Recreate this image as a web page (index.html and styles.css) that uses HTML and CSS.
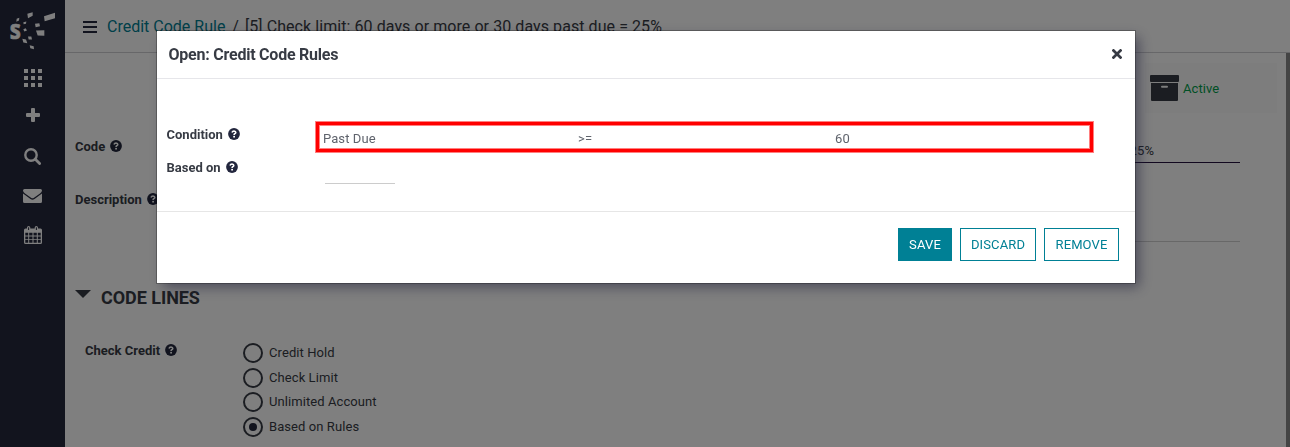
FILE: index.html
```html
<!DOCTYPE html>
<html lang="en">
<head>
<meta charset="utf-8">
<title>Credit Code Rule</title>
<link rel="stylesheet" href="styles.css">
</head>
<body>
<svg width="0" height="0" class="defs">
  <symbol id="help" viewBox="0 0 12 12">
    <circle cx="6" cy="6" r="5.9" fill="#22263d"/>
    <path d="M4 4.500Q4.500 3 6 3Q7.800 3.100 7.800 4.500Q7.700 5.400 6.700 5.800Q6.100 6.100 6.100 7" fill="none" stroke="#fff" stroke-width="1.600"/>
    <rect x="5.200" y="7.900" width="1.800" height="1.600" fill="#fff"/>
  </symbol>
</svg>
<div class="app">
  <nav class="sidebar">
    <svg class="logo" viewBox="24 30 150 125">
      <text transform="translate(29 117) scale(.86 1)" class="logo-s">s</text>
      <path d="M132 48L165 38V54L134 63ZM108 91L133 90V107L113 106ZM105 71L118 69 120 78 107 81ZM82 41L98 36V47L84 54ZM50 56L58 53 57 61 49 65ZM70 66L79 64 78 71 71 72ZM70 87L77 84 81 91 73 94ZM84 109L94 109 96 118 86 118ZM67 116L78 118 82 129 70 127ZM89 135L101 138 102 147 91 144Z" fill="#fff"/>
    </svg>
    <svg class="nav-apps" viewBox="0 0 18 18"><path d="M0 0h4v4H0zM7 0h4v4H7zM14 0h4v4h-4zM0 7h4v4H0zM7 7h4v4H7zM14 7h4v4h-4zM0 14h4v4H0zM7 14h4v4H7zM14 14h4v4h-4z" fill="#fff"/></svg>
    <svg class="nav-plus" viewBox="0 0 14 14"><path d="M5 1Q5 0 6 0h2Q9 0 9 1v4h4q1 0 1 1v2q0 1-1 1H9v4q0 1-1 1H6q-1 0-1-1V9H1Q0 9 0 8V6Q0 5 1 5h4z" fill="#fff"/></svg>
    <svg class="nav-search" viewBox="0 0 17 17"><circle cx="7" cy="7" r="5.700" fill="none" stroke="#fff" stroke-width="2.400"/><path d="M11.300 11.300L15.600 15.600" stroke="#fff" stroke-width="2.800" stroke-linecap="round"/></svg>
    <svg class="nav-mail" viewBox="0 0 19 14"><path d="M1.500 0h16Q19 0 19 1.500 19 3 17 4.500L11 8.800Q9.500 9.800 8 8.800L2 4.500Q0 3 0 1.500 0 0 1.500 0zM0 4.600L7.500 10Q9.500 11.300 11.500 10L19 4.600V12.500Q19 14 17.500 14h-16Q0 14 0 12.500z" fill="#fff"/></svg>
    <svg class="nav-cal" viewBox="0 0 18 18"><path fill-rule="evenodd" d="M1.500 2.500H3V1.500Q3 0 4.600 0T6.300 1.500v1h4.400v-1Q10.700 0 12.300 0T14 1.500v1h2.500Q18 2.500 18 4v12.500q0 1.500-1.500 1.500h-15Q0 18 0 16.500V4Q0 2.500 1.500 2.500zM1.300 6.800V9.500H4.200V6.800zM5.200 6.800V9.500H8.500V6.800zM9.500 6.800V9.500h3.300V6.800zM13.800 6.800V9.500h2.900V6.800zM1.300 10.400v2.800H4.200v-2.800zM5.200 10.400v2.800H8.500v-2.800zM9.500 10.400v2.800h3.300v-2.800zM13.800 10.400v2.800h2.900v-2.800zM1.300 14.100v2.600H4.200v-2.600zM5.200 14.100v2.600H8.500v-2.600zM9.500 14.100v2.600h3.300v-2.600zM13.800 14.100v2.600h2.900v-2.600z" fill="#fff"/><path d="M4.600 1.300V4M12.400 1.300V4" stroke="#24283d" stroke-width="1"/></svg>
  </nav>
  <main class="main">
    <header class="topbar">
      <svg class="burger" viewBox="0 0 14 12"><path d="M0 1h14M0 6h14M0 11h14" stroke="#24283f" stroke-width="2"/></svg>
      <div class="crumbs"><a>Credit Code Rule</a><span class="sep">/</span><span class="current">[5] Check limit: 60 days or more or 30 days past due = 25%</span></div>
    </header>
    <section class="sheet">
      <div class="stats"><div class="stat">
        <svg class="archive" viewBox="0 0 29 26"><path fill="#373b44" fill-rule="evenodd" d="M1 0h27q1 0 1 1v5q0 1-1 1H1Q0 7 0 6V1Q0 0 1 0zM1 8h27v17q0 1-1 1H2q-1 0-1-1zM12 10.700q-1 0-1 1t1 1h5q1 0 1-1t-1-1z"/></svg>
        <span>Active</span>
      </div></div>
      <div class="field code"><label>Code <svg class="help"><use href="#help"/></svg></label><div class="value">60 days or more or 30 days past due = 25%</div></div>
      <div class="field desc"><label>Description <svg class="help"><use href="#help"/></svg></label><div class="value"></div></div>
      <h2><i class="caret"></i><span>CODE LINES</span></h2>
      <div class="credit">
        <label>Check Credit <svg class="help"><use href="#help"/></svg></label>
        <div class="radios">
          <div class="radio"><i></i><span>Credit Hold</span></div>
          <div class="radio"><i></i><span>Check Limit</span></div>
          <div class="radio"><i></i><span>Unlimited Account</span></div>
          <div class="radio on"><i></i><span>Based on Rules</span></div>
        </div>
      </div>
    </section>
  </main>
</div>
<div class="backdrop">
  <div class="modal">
    <header class="modal-head"><h1>Open: Credit Code Rules</h1>
      <svg class="close" viewBox="0 0 10 10"><path d="M1.500 1.500L8.500 8.500M8.500 1.500L1.500 8.500" stroke="#373b44" stroke-width="2.700" stroke-linecap="square"/></svg>
    </header>
    <div class="modal-body">
      <div class="row"><label>Condition <svg class="help"><use href="#help"/></svg></label>
        <div class="condition"><span>Past Due</span><span>&gt;=</span><span>60</span></div></div>
      <div class="row based"><label>Based on <svg class="help"><use href="#help"/></svg></label><div class="blank"></div></div>
    </div>
    <footer class="modal-foot"><button class="primary">SAVE</button><button class="discard">DISCARD</button><button class="remove">REMOVE</button></footer>
  </div>
</div>
</body>
</html>
```
FILE: styles.css
```css
* { box-sizing: border-box; }
body { margin: 0; height: 447px; overflow: hidden; background: #fff; color: #373b44; font: 13px/20px Roboto, sans-serif; letter-spacing: .08px; }
svg { display: block; flex: none; }
.defs { position: absolute; }
.app { display: flex; height: 447px; }
.sidebar { width: 65px; flex: none; background: #24283d; display: flex; flex-direction: column; align-items: center; padding-top: 10px; }
.logo { width: 50px; height: 42px; }
.logo-s { font: bold 78px "Open Sans", sans-serif; fill: #fff; stroke: #fff; stroke-width: 2; letter-spacing: 0; }
.nav-apps { width: 18px; height: 18px; margin-top: 17px; }
.nav-plus { width: 14px; height: 14px; margin-top: 21px; }
.nav-search { width: 17px; height: 17px; margin-top: 26px; }
.nav-mail { width: 19px; height: 14px; margin-top: 24px; }
.nav-cal { width: 18px; height: 18px; margin-top: 23px; }
.main { flex: 1; min-width: 0; display: flex; flex-direction: column; }
.topbar { height: 53px; flex: none; border-bottom: 1px solid #cfcfd3; display: flex; align-items: center; padding: 1px 0 0 18px; }
.burger { width: 14px; height: 12px; margin: 1px 10px 0 0; }
.crumbs { font-size: 16px; letter-spacing: 0; white-space: nowrap; }
.crumbs a { color: #008093; }
.sep { margin: 0 6px 0 7px; }
.current { letter-spacing: .07px; }
.sheet { flex: 1; min-height: 0; border-right: 4px solid #888; padding: 10px 0 0 10px; }
.stats { display: flex; justify-content: flex-end; padding-right: 9px; }
.stat { width: 132px; height: 50px; background: #fafafa; display: flex; align-items: center; gap: 4px; padding-left: 5px; color: #00a04a; }
.stat span { padding-top: 2px; }
.archive { width: 29px; height: 26px; }
label { display: flex; align-items: center; gap: 5px; font-weight: 700; font-size: 13px; line-height: 20px; letter-spacing: 0; }
.help { width: 12px; height: 12px; margin-top: -2px; }
.field { display: flex; justify-content: space-between; padding-right: 46px; }
.field label { align-self: flex-start; }
.value { width: 410px; text-align: right; padding-right: 86px; }
.code { height: 50px; padding-top: 23px; }
.code label, .desc label, .credit label { margin-top: 1px; }
.code .value { border-bottom: 1px solid #24103f; padding-top: 5px; }
.desc { height: 79px; padding-top: 26px; }
.desc .value { border-bottom: 1px solid #d0d0d0; }
h2 { margin: 45px 0 0; height: 22px; display: flex; align-items: center; gap: 10px; font-size: 18px; font-weight: 700; line-height: 22px; letter-spacing: -.05px; }
.caret { border: 8px solid transparent; border-top-color: #373b44; border-bottom: 0; margin-bottom: 8px; }
.credit { display: grid; grid-template-columns: 158px 1fr; padding: 31px 0 0 10px; }
.credit label { align-self: start; }
.radios { display: grid; gap: 4.700px; padding-top: 3px; }
.radio { display: flex; align-items: center; gap: 6px; height: 20px; }
.radio i { width: 20px; height: 20px; border: 2px solid #373b44; border-radius: 50%; display: flex; align-items: center; justify-content: center; }
.radio.on i::after { content: ""; width: 8px; height: 8px; border-radius: 50%; background: #24283d; }
.backdrop { position: fixed; inset: 0; background: rgba(0,0,0,.5); }
.modal { position: absolute; left: 156px; top: 30px; width: 980px; height: 254px; background: #fff; border: 1px solid rgba(0,0,0,.25); background-clip: padding-box; box-shadow: 5px 5px 12px -2px rgba(40,40,65,.6); }
.modal-head { height: 48px; border-bottom: 1px solid #e6e6ea; display: flex; align-items: center; justify-content: space-between; padding: 0 13px 0 11.500px; }
h1 { margin: 0; font-size: 16px; font-weight: 700; line-height: 20px; letter-spacing: -.23px; }
.close { width: 10px; height: 10px; margin-top: -1px; }
.modal-body { height: 133px; border-bottom: 1px solid #e6e6e6; padding: 42px 0 0 9.500px; }
.row { display: grid; grid-template-columns: 149.500px 777px; }
.row label { align-self: start; margin-top: 4px; }
.condition { height: 30px; margin: 1px 0; border: 3px solid #f00; box-shadow: 0 0 0 1px rgba(255,0,0,.5), inset 0 0 0 1px rgba(255,0,0,.5); display: grid; grid-template-columns: 255px 257px 1fr; align-items: center; padding: 3px 0 0 4px; color: #5f636c; }
.based label { margin-top: 5px; }
.blank { width: 70px; height: 31px; margin-left: 9px; border-bottom: 1px solid #ccc; }
.modal-foot { display: flex; justify-content: flex-end; gap: 8px; padding: 16px 16px 0; }
button { height: 33px; border: 1px solid #008095; background: #fff; color: #008095; padding: 0; font: 13px Roboto, sans-serif; letter-spacing: .12px; }
.primary { width: 54px; background: #008095; color: #fff; }
.discard { width: 76px; }
.remove { width: 75px; }
```
